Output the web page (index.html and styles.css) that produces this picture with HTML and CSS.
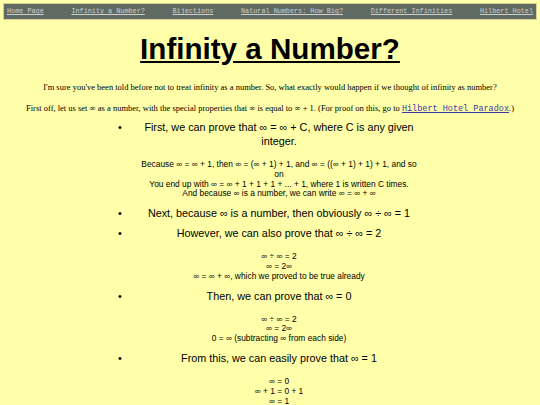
FILE: index.html
```html
<!DOCTYPE html>
<html>
<head>
<meta charset="utf-8">
<link rel="stylesheet" href="styles.css">
</head>
<body>
<div class="nav">
  <a href="#">Home Page</a>
  <a href="#">Infinity a Number?</a>
  <a href="#">Bijections</a>
  <a href="#">Natural Numbers: How Big?</a>
  <a href="#">Different Infinities</a>
  <a href="#">Hilbert Hotel</a>
</div>
<h1 class="title">Infinity a Number?</h1>
<p class="intro first">I'm sure you've been told before not to treat infinity as a number. So, what exactly would happen if we thought of infinity as number?</p>
<p class="intro">First off, let us set ∞ as a number, with the special properties that ∞ is equal to ∞ + 1. (For proof on this, go to <a class="mono" href="#">Hilbert Hotel Paradox</a>.)</p>
<ul class="steps">
  <li class="step"><span class="head">First, we can prove that ∞ = ∞ + C, where C is any given integer.</span>
    <div class="proof">Because ∞ = ∞ + 1, then ∞ = (∞ + 1) + 1, and ∞ = ((∞ + 1) + 1) + 1, and so on<br>You end up with ∞ = ∞ + 1 + 1 + 1 + ... + 1, where 1 is written C times.<br>And because ∞ is a number, we can write ∞ = ∞ + ∞</div>
  </li>
  <li class="step"><span class="head">Next, because ∞ is a number, then obviously ∞ ÷ ∞ = 1</span></li>
  <li class="step"><span class="head">However, we can also prove that ∞ ÷ ∞ = 2</span>
    <div class="proof">∞ ÷ ∞ = 2<br>∞ = 2∞<br>∞ = ∞ + ∞, which we proved to be true already</div>
  </li>
  <li class="step"><span class="head">Then, we can prove that ∞ = 0</span>
    <div class="proof">∞ ÷ ∞ = 2<br>∞ = 2∞<br>0 = ∞ (subtracting ∞ from each side)</div>
  </li>
  <li class="step"><span class="head">From this, we can easily prove that ∞ = 1</span>
    <div class="proof">∞ = 0<br>∞ + 1 = 0 + 1<br>∞ = 1</div>
  </li>
</ul>
</body>
</html>
```
FILE: styles.css
```css
html, body {
  margin: 0;
  padding: 0;
  background: #ffffaa;
}
body {
  font-family: "Liberation Serif", serif;
  color: #000;
}
.nav {
  margin: 3px 3px 0 3px;
  border: 1px solid #d6d08e;
  background: #5f6a62;
  padding: 4px 3px 4px 3px;
  display: flex;
  justify-content: space-between;
  font-family: "Liberation Mono", monospace;
  font-size: 6.8px;
  line-height: 7px;
}
.nav a {
  color: #cfcfcf;
  text-decoration: underline;
}
.title {
  font-family: "Liberation Sans", Arial, sans-serif;
  font-weight: bold;
  font-size: 29.6px;
  text-align: center;
  text-decoration: underline;
  margin: 12px 0 0 0;
  line-height: 34px;
}
.intro {
  font-size: 8.5px;
  text-align: center;
  margin: 10px 0 0 0;
  line-height: 11px;
}
.intro.first {
  margin-top: 16px;
}
.mono {
  font-family: "Liberation Mono", monospace;
  color: #3a3aa8;
}
.steps {
  font-family: "Liberation Sans", Arial, sans-serif;
  list-style: none;
  margin: 5px 0 0 118px;
  padding: 0;
}
.step {
  display: grid;
  grid-template-columns: 24px 274px;
  font-size: 10.8px;
  line-height: 14px;
  text-align: center;
  margin-bottom: 6px;
}
.step::before {
  content: "•";
  grid-column: 1;
  grid-row: 1;
  text-align: left;
}
.head {
  grid-column: 2;
  grid-row: 1;
}
.proof {
  grid-column: 2;
  font-size: 8.4px;
  line-height: 9.8px;
  margin: 12px -5px 1px -5px;
}
```
